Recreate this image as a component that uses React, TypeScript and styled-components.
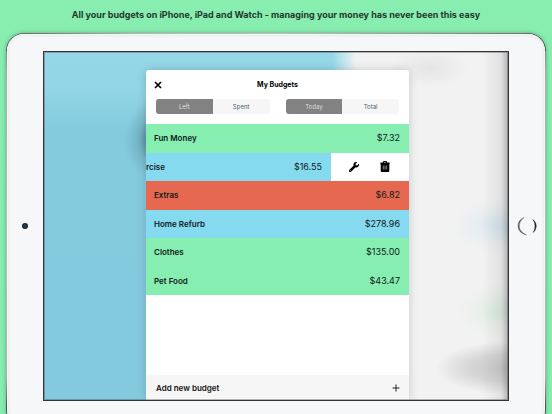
import React, { useState } from "react";
import styled, { createGlobalStyle } from "styled-components";
import { FaWrench } from "react-icons/fa";

const GlobalStyle = createGlobalStyle`
  * { box-sizing: border-box; }
  body { margin: 0; font-family: Inter, "Liberation Sans", sans-serif; color: #111; }
  button { font: inherit; color: inherit; border: 0; padding: 0; background: none; cursor: pointer; }
`;

const tones = { green: "#87eeb1", blue: "#86daf0", red: "#e66850" };
type Tone = keyof typeof tones;

const Page = styled.main`
  height: 100vh;
  overflow: hidden;
  background: #87eeb0;
`;

const Headline = styled.h1`
  margin: 0;
  height: 33px;
  padding-top: 8px;
  font-size: 9px;
  line-height: 14px;
  font-weight: 700;
  text-align: center;
  color: #24372d;
`;

const Tablet = styled.div`
  height: calc(100vh - 9px);
  margin: 0 6px;
  padding: 1px;
  border-radius: 18px 18px 30px 30px;
  background:
    linear-gradient(90deg, #555 0, #666 8px, #b5b2b4 130px, #c4c4c4 50%, #9b9598 75%, #777 95%, #444 100%) top / 100% 18px no-repeat,
    linear-gradient(180deg, #666 0, #aaa 40px, #b5c2bb 50%, #b0b0b0 85%, #222 96%);
  box-shadow: 0 0 4px rgba(30, 80, 50, 0.4);
`;

const Bezel = styled.div`
  height: 100%;
  display: grid;
  grid-template-columns: 36px 1fr 36px;
  align-items: start;
  padding-top: 17px;
  border-radius: 17px 17px 29px 29px;
  background: #f6f7f9;
  box-shadow: inset 0 0 2px 1px #fff, inset 0 0 3px 1px #d0d0d6;
`;

const BezelSide = styled.div`
  height: calc(100vh - 64px);
  display: flex;
  align-items: center;
  justify-content: center;
`;

const Camera = styled.span`
  width: 6px;
  height: 6px;
  border-radius: 50%;
  background: radial-gradient(circle, #244763 0, #17202a 70%);
`;

const Screen = styled.div`
  height: calc(100vh - 64px);
  display: flex;
  justify-content: center;
  padding: 18px 0 0 3px;
  border: 1px solid #343438;
  outline: 1px solid rgba(60, 60, 64, 0.35);
  outline-offset: -2px;
  overflow: hidden;
  background:
    linear-gradient(270deg, rgba(70, 70, 70, 0.36) 0, rgba(110, 110, 110, 0.13) 7px, rgba(130, 130, 130, 0) 26px),
    radial-gradient(ellipse 32px 42px at 112px 88px, rgba(45, 70, 85, 0.75), rgba(60, 100, 120, 0.22) 55%, rgba(60, 100, 120, 0) 100%),
    radial-gradient(ellipse 50px 28px at 458px 174px, rgba(175, 216, 232, 0.45), rgba(190, 220, 232, 0.18) 55%, rgba(200, 225, 235, 0) 100%),
    radial-gradient(ellipse 48px 28px at 458px 258px, rgba(195, 230, 205, 0.5), rgba(205, 232, 212, 0.18) 55%, rgba(215, 235, 220, 0) 100%),
    radial-gradient(ellipse 66px 26px at 458px 316px, rgba(165, 165, 165, 0.55), rgba(175, 175, 175, 0.42) 50%, rgba(210, 210, 210, 0) 100%),
    radial-gradient(ellipse 40px 20px at 386px 16px, rgba(190, 190, 190, 0.25), rgba(200, 200, 200, 0) 100%),
    linear-gradient(90deg, transparent 288px, #f2f2f2 312px),
    linear-gradient(180deg, #95d8e8 0, #92d5e6 35px, #84cbde 80px, #84cade 100%);
`;

const Dialog = styled.section`
  flex: 0 1 263px;
  min-width: 0;
  display: flex;
  flex-direction: column;
  border-radius: 3px 3px 0 0;
  overflow: hidden;
  background: #fff;
  box-shadow: 0 0 8px rgba(60, 70, 80, 0.25);
`;

const DialogHeader = styled.header`
  display: grid;
  grid-template-columns: 24px 1fr 24px;
  align-items: center;
  height: 29px;
`;

const DialogTitle = styled.h2`
  margin: 0;
  font-size: 7px;
  line-height: 12px;
  font-weight: 700;
  text-align: center;
  color: #000;
`;

const IconButton = styled.button`
  display: flex;
  align-items: center;
  justify-content: center;
  height: 20px;
  color: #000;
`;

const Filters = styled.div`
  display: grid;
  grid-template-columns: 1fr 1fr;
  gap: 16px;
  padding: 0 10px 10px;
`;

const Segmented = styled.div`
  display: grid;
  grid-template-columns: 1fr 1fr;
  height: 15px;
  border-radius: 3px;
  overflow: hidden;
  background: #f6f6f6;
`;

const Segment = styled.button<{ $active: boolean }>`
  font-size: 6px;
  line-height: 15px;
  background: ${(p) => (p.$active ? "#828282" : "transparent")};
  color: ${(p) => (p.$active ? "#dedede" : "#456078")};
`;

const BudgetList = styled.ul`
  display: grid;
  grid-auto-rows: 1fr;
  height: 171px;
  margin: 0;
  padding: 0;
  list-style: none;
`;

const BudgetItem = styled.li`
  display: flex;
  min-width: 0;
`;

const BudgetRow = styled.div<{ $tone: Tone; $swiped?: boolean }>`
  flex: 1;
  display: flex;
  align-items: center;
  justify-content: space-between;
  padding: ${(p) => (p.$swiped ? "0 9px 0 0" : "0 9px 0 8px")};
  background: ${(p) => tones[p.$tone]};
`;

const BudgetName = styled.span`
  font-size: 8px;
  line-height: 12px;
  font-weight: 600;
  color: #10201a;
`;

const Amount = styled.span`
  font-size: 9px;
  line-height: 14px;
  color: #10201a;
`;

const RowActions = styled.div`
  flex: 0 0 78px;
  display: grid;
  grid-template-columns: 1fr 1fr;
  align-items: center;
  padding: 0 9px 0 8px;
`;

const AddBudget = styled.button`
  display: flex;
  align-items: center;
  justify-content: space-between;
  height: 25px;
  margin-top: auto;
  padding: 0 9px 0 10px;
  font-size: 8px;
  line-height: 12px;
  font-weight: 600;
  background: #f6f6f6;
`;

const CloseIcon = () => (
  <svg width="8" height="8" viewBox="0 0 8 8" stroke="#000" strokeWidth="1.7" aria-hidden="true">
    <path d="M1 1l6 6M7 1L1 7" />
  </svg>
);

const TrashIcon = () => (
  <svg width="10" height="11" viewBox="0 0 10 11" aria-hidden="true">
    <path d="M3 1.500V.8Q3 0 3.800 0h2.400Q7 0 7 .8v.7h2.600v1.800H9.300V10q0 1-1 1H1.700q-1 0-1-1V3.300H.4V1.500zM4 1.500h2V.9H4z" fill="#000" fillRule="evenodd" />
    <path d="M3.300 4.500v4M5 4.500v4M6.700 4.500v4" stroke="#bbb" strokeWidth=".7" />
  </svg>
);

const PlusIcon = () => (
  <svg width="8" height="8" viewBox="0 0 8 8" stroke="#222" strokeWidth="1" aria-hidden="true">
    <path d="M4 .5v7M.5 4h7" />
  </svg>
);

const HomeIcon = () => (
  <svg width="22" height="22" viewBox="0 0 22 22" fill="none" aria-hidden="true">
    <circle cx="11" cy="11" r="9" stroke="#ececef" strokeWidth=".8" />
    <path d="M8 2.500Q2 5 2 11q0 6.500 8.500 9Q3.200 16.500 3.200 11 3.200 6 8 2.500z" fill="#555" stroke="#555" strokeWidth=".4" />
    <path d="M17 4.500q3.500 3 3.300 7-.4 3.500-3 6 1.700-3 1.700-6.200 0-3.800-2-6.800z" fill="#222" stroke="#222" strokeWidth=".4" />
  </svg>
);

type Budget = { name: string; amount: string; tone: Tone; swiped?: boolean };

const budgets: Budget[] = [
  { name: "Fun Money", amount: "$7.32", tone: "green" },
  { name: "rcise", amount: "$16.55", tone: "blue", swiped: true },
  { name: "Extras", amount: "$6.82", tone: "red" },
  { name: "Home Refurb", amount: "$278.96", tone: "blue" },
  { name: "Clothes", amount: "$135.00", tone: "green" },
  { name: "Pet Food", amount: "$43.47", tone: "green" },
];

function Switcher({ options, label }: { options: string[]; label: string }) {
  const [active, setActive] = useState(options[0]);
  return (
    <Segmented role="group" aria-label={label}>
      {options.map((o) => (
        <Segment key={o} type="button" $active={o === active} aria-pressed={o === active} onClick={() => setActive(o)}>
          {o}
        </Segment>
      ))}
    </Segmented>
  );
}

export default function App() {
  return (
    <Page>
      <GlobalStyle />
      <Headline>All your budgets on iPhone, iPad and Watch - managing your money has never been this easy</Headline>
      <Tablet>
        <Bezel>
          <BezelSide>
            <Camera />
          </BezelSide>
          <Screen>
            <Dialog aria-labelledby="budgets-title">
              <DialogHeader>
                <IconButton type="button" aria-label="Close">
                  <CloseIcon />
                </IconButton>
                <DialogTitle id="budgets-title">My Budgets</DialogTitle>
              </DialogHeader>
              <Filters>
                <Switcher label="Amount" options={["Left", "Spent"]} />
                <Switcher label="Period" options={["Today", "Total"]} />
              </Filters>
              <BudgetList>
                {budgets.map((b) => (
                  <BudgetItem key={b.name}>
                    <BudgetRow $tone={b.tone} $swiped={b.swiped}>
                      <BudgetName>{b.name}</BudgetName>
                      <Amount>{b.amount}</Amount>
                    </BudgetRow>
                    {b.swiped && (
                      <RowActions>
                        <IconButton type="button" aria-label="Edit">
                          <FaWrench size={10} />
                        </IconButton>
                        <IconButton type="button" aria-label="Delete">
                          <TrashIcon />
                        </IconButton>
                      </RowActions>
                    )}
                  </BudgetItem>
                ))}
              </BudgetList>
              <AddBudget type="button">
                Add new budget
                <PlusIcon />
              </AddBudget>
            </Dialog>
          </Screen>
          <BezelSide>
            <IconButton type="button" aria-label="Home">
              <HomeIcon />
            </IconButton>
          </BezelSide>
        </Bezel>
      </Tablet>
    </Page>
  );
}
